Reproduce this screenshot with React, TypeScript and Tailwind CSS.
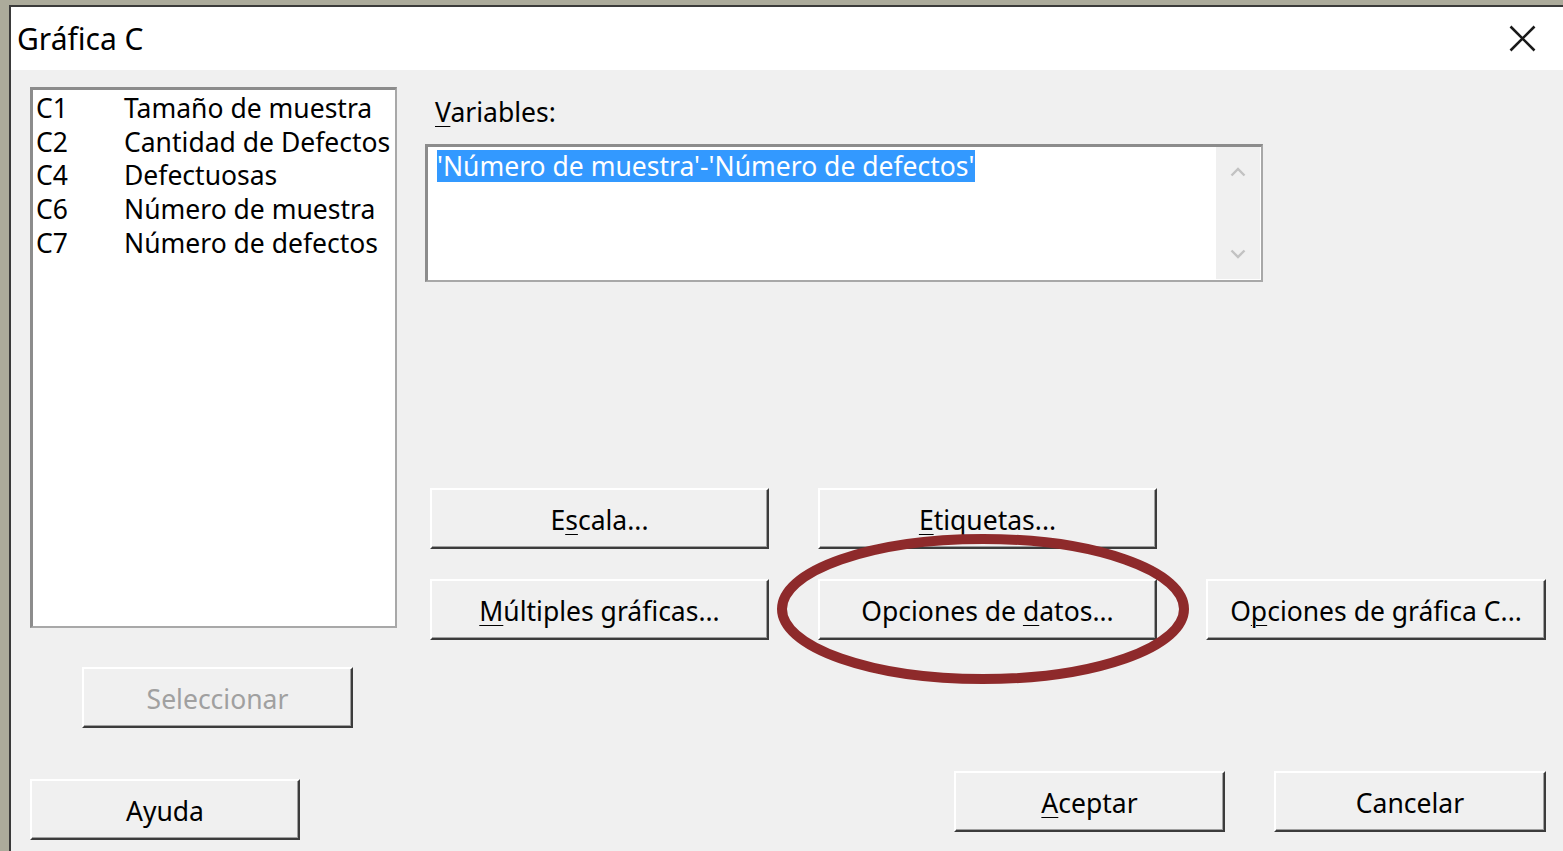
import type { ReactNode } from "react";

const columns = [
  { id: "C1", name: "Tamaño de muestra" },
  { id: "C2", name: "Cantidad de Defectos" },
  { id: "C4", name: "Defectuosas" },
  { id: "C6", name: "Número de muestra" },
  { id: "C7", name: "Número de defectos" },
];

const font = "font-['Noto_Sans',_'Open_Sans',_sans-serif]";

function WinButton({
  children,
  className = "",
  disabled = false,
}: {
  children: ReactNode;
  className?: string;
  disabled?: boolean;
}) {
  return (
    <button
      className={`h-[61px] pt-[3px] bg-[#f0f0f0] border-t-2 border-l-2 border-t-white border-l-white border-r-2 border-b-2 border-r-[#3c3c3c] border-b-[#3c3c3c] shadow-[inset_-1px_-1px_0_#a0a0a0] text-[26.5px] leading-none flex items-center justify-center ${
        disabled ? "text-[#a0a0a0]" : "text-black"
      } ${className}`}
    >
      <span className="whitespace-pre">{children}</span>
    </button>
  );
}

function Key({ children }: { children: ReactNode }) {
  return <span className="underline decoration-1 underline-offset-[4px]">{children}</span>;
}

export default function App() {
  return (
    <div
      className={`w-[1563px] h-[851px] overflow-hidden bg-[#acab9b] pl-[9px] pt-[5px] ${font}`}
    >
      <div className="h-full flex flex-col border-l-2 border-t-2 border-[#3a3a3a] bg-[#f0f0f0]">
        {/* title bar */}
        <div className="h-[63px] shrink-0 bg-white flex items-center justify-between pl-[6px] pr-[27px]">
          <span className="text-[30px] text-black leading-none">Gráfica C</span>
          <svg width="27" height="27" viewBox="0 0 27 27">
            <path d="M1.5 1.5 L25.5 25.5 M25.5 1.5 L1.5 25.5" stroke="#1a1a1a" strokeWidth="2.6" />
          </svg>
        </div>

        {/* dialog body */}
        <div className="relative flex-1 flex pl-[19px]">
          {/* left column */}
          <div className="w-[367px] flex flex-col pt-[17px]">
            <div className="h-[541px] bg-white border-t-[3px] border-l-[3px] border-[#8c8c8c] border-r-2 border-b-2 border-r-[#a8a8a8] border-b-[#a8a8a8] pl-[3px] pt-[2px]">
              {columns.map((c) => (
                <div key={c.id} className="flex h-[33.7px] items-center text-[26.5px] text-black">
                  <span className="w-[88px]">{c.id}</span>
                  <span className="whitespace-nowrap">{c.name}</span>
                </div>
              ))}
            </div>
            <WinButton disabled className="mt-[39px] ml-[52px] w-[271px]">
              Seleccionar
            </WinButton>
            <WinButton className="mt-[51px] w-[270px]">Ayuda</WinButton>
          </div>

          {/* right column */}
          <div className="ml-[28px] flex-1 flex flex-col">
            <div className="mt-[24px] h-[38px] pl-[10px] flex items-center text-[26.5px] text-black">
              <span>
                <Key>V</Key>ariables:
              </span>
            </div>
            <div className="mt-[12px] w-[838px] h-[138px] flex bg-white border-t-[3px] border-l-[3px] border-[#8c8c8c] border-r-2 border-b-2 border-r-[#a8a8a8] border-b-[#a8a8a8]">
              <div className="flex-1 pt-[3px] pl-[9px]">
                <span className="inline-block bg-[#3399ff] text-white text-[26.5px] leading-[32px] whitespace-nowrap">
                  'Número de muestra'-'Número de defectos'
                </span>
              </div>
              <div className="w-[44px] mr-[1px] mb-[1px] bg-[#f0f0f0] flex flex-col items-center justify-between py-[20px]">
                <svg width="16" height="10" viewBox="0 0 16 10">
                  <path d="M1.5 8.5 L8 2 L14.5 8.5" fill="none" stroke="#c2c2c2" strokeWidth="2.4" />
                </svg>
                <svg width="16" height="10" viewBox="0 0 16 10">
                  <path d="M1.5 1.5 L8 8 L14.5 1.5" fill="none" stroke="#c2c2c2" strokeWidth="2.4" />
                </svg>
              </div>
            </div>

            <div className="mt-[206px] pl-[5px] flex gap-[49px]">
              <WinButton className="w-[339px]">
                E<Key>s</Key>cala...
              </WinButton>
              <WinButton className="w-[339px]">
                <Key>E</Key>tiquetas...
              </WinButton>
            </div>
            <div className="mt-[30px] pl-[5px] flex gap-[49px]">
              <WinButton className="w-[339px]">
                <Key>M</Key>últiples gráficas...
              </WinButton>
              <WinButton className="w-[339px]">
                Opciones de <Key>d</Key>atos...
              </WinButton>
              <WinButton className="w-[340px]">
                O<Key>p</Key>ciones de gráfica C...
              </WinButton>
            </div>
            <div className="mt-[131px] pl-[529px] flex gap-[49px]">
              <WinButton className="w-[271px]">
                <Key>A</Key>ceptar
              </WinButton>
              <WinButton className="w-[272px]">Cancelar</WinButton>
            </div>
          </div>

          {/* red marker ring around the data options button */}
          <svg
            className="absolute left-0 top-0 pointer-events-none"
            width="1552"
            height="780"
            viewBox="0 0 1552 780"
          >
            <ellipse cx="972" cy="539" rx="201" ry="70" fill="none" stroke="#8e2a2b" strokeWidth="10" />
          </svg>
        </div>
      </div>
    </div>
  );
}
